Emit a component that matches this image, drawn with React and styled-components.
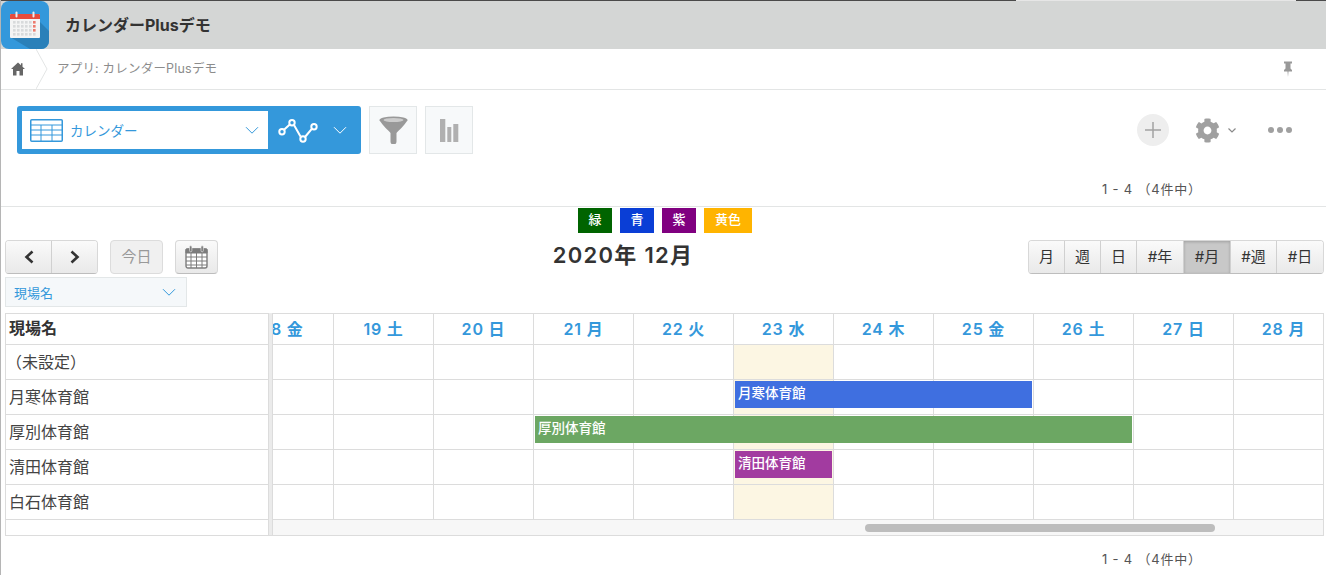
import styled, { createGlobalStyle } from "styled-components";
import { FaCog } from "react-icons/fa";

const days = [
  { label: "18 金" },
  { label: "19 土" },
  { label: "20 日" },
  { label: "21 月" },
  { label: "22 火" },
  { label: "23 水", today: true },
  { label: "24 木" },
  { label: "25 金" },
  { label: "26 土" },
  { label: "27 日" },
  { label: "28 月" },
];

const rows = [
  { name: "（未設定）", indent: true },
  { name: "月寒体育館", event: { start: 6, span: 3, color: "#3f6fe0" } },
  { name: "厚別体育館", event: { start: 4, span: 6, color: "#6ca763" } },
  { name: "清田体育館", event: { start: 6, span: 1, color: "#a23ba0" } },
  { name: "白石体育館" },
];

const legend = [
  { label: "緑", color: "#006400", width: 34 },
  { label: "青", color: "#0a3ed6", width: 34 },
  { label: "紫", color: "#800080", width: 34 },
  { label: "黄色", color: "#ffb400", width: 48 },
];

const modes = [
  { label: "月", width: 35 },
  { label: "週", width: 36 },
  { label: "日", width: 36 },
  { label: "#年", width: 47 },
  { label: "#月", width: 47, active: true },
  { label: "#週", width: 46 },
  { label: "#日", width: 47 },
];

const Chevron = ({ color, size = 14 }) => (
  <svg width={size} height={size * 0.6} viewBox="0 0 14 8" fill="none" stroke={color} strokeWidth="1">
    <path d="M1 1l6 6 6-6" />
  </svg>
);

const AppIcon = () => (
  <svg width="49" height="48" viewBox="0 0 49 48">
    <defs>
      <clipPath id="appclip">
        <rect x="1" y="0" width="48" height="48" rx="8" />
      </clipPath>
    </defs>
    <g clipPath="url(#appclip)">
      <rect x="1" y="0" width="48" height="48" fill="#3498db" />
      <path d="M39 20L49 30V48H30L10 36Z" fill="#2a80b9" />
      <rect x="10" y="13" width="30" height="24" rx="1" fill="#f4f4f4" />
      <path d="M10 18v-4a1 1 0 0 1 1-1h28a1 1 0 0 1 1 1v4z" fill="#e74c3c" />
      <rect x="15.500" y="10.500" width="2" height="6" rx="1" fill="#eee" />
      <rect x="32.500" y="10.500" width="2" height="6" rx="1" fill="#eee" />
      {[0, 1, 2, 3].map((r) =>
        [0, 1, 2, 3, 4, 5].map((c) => (
          <rect
            key={`${r}-${c}`}
            x={13 + c * 4}
            y={20 + r * 4}
            width="2.600"
            height="2.600"
            fill={c === 5 && r < 3 ? "#ec7b6e" : "#d8dadb"}
          />
        ))
      )}
    </g>
  </svg>
);

function App() {
  return (
    <Page>
      <GlobalStyle />
      <Header>
        <AppIcon />
        <AppTitle>カレンダーPlusデモ</AppTitle>
      </Header>
      <Breadcrumb>
        <HomeCell>
          <svg width="14" height="14" viewBox="0 0 14 14" fill="#666">
            <path d="M7 0.500L0 7h2v6.500h3.500V9h3v4.500H12V7h2l-2.500-2.300V1.200H10v2.100z" />
          </svg>
          <svg width="12" height="40" viewBox="0 0 12 40" fill="none" stroke="#e3e5e5">
            <path d="M0 0l11 20L0 40" />
          </svg>
        </HomeCell>
        <Crumb>アプリ: カレンダーPlusデモ</Crumb>
        <svg width="10" height="16" viewBox="0 0 10 16" fill="#999">
          <path d="M1 0.500h8v2H7.500v5L9 9v1.500H5.500L5 16l-.5-5.500H1V9l1.500-1.500v-5H1z" />
        </svg>
      </Breadcrumb>
      <Toolbar>
        <ViewPicker>
          <ViewSelect>
            <svg width="33" height="23" viewBox="0 0 33 23" fill="#fff" stroke="#3498db">
              <rect x="0.750" y="0.750" width="31.500" height="21.500" rx="1" strokeWidth="1.500" />
              <path d="M1 6h31M1 11h31M1 16h31M11 6v16M22 6v16" strokeWidth="1" />
            </svg>
            <ViewName>カレンダー</ViewName>
            <Chevron color="#3498db" />
          </ViewSelect>
          <GraphPicker>
            <svg width="40" height="26" viewBox="0 0 40 26" fill="none" stroke="#fff" strokeWidth="2">
              <path d="M6 12.800L11.800 7.600M16 8l6.500 11.500M27 20L33.800 11.800" />
              <circle cx="4" cy="14.700" r="2.700" />
              <circle cx="14" cy="5.700" r="2.700" />
              <circle cx="25" cy="22" r="2.700" />
              <circle cx="36" cy="9.700" r="2.700" />
            </svg>
            <Chevron color="#fff" />
          </GraphPicker>
        </ViewPicker>
        <ToolButton>
          <svg width="29" height="28" viewBox="0 0 29 28">
            <path d="M0.500 4C4 10 9 14 11.500 17v8.500a3 3 0 0 0 6 0V17C20 14 25 10 28.500 4z" fill="#999" />
            <ellipse cx="14.500" cy="4" rx="14" ry="3.500" fill="#999" />
            <ellipse cx="14.500" cy="4" rx="10" ry="2" fill="#ccc" />
          </svg>
        </ToolButton>
        <ToolButton>
          <svg width="19" height="23" viewBox="0 0 19 23" fill="#b0b0b0">
            <rect x="0" y="0" width="5.300" height="23" />
            <rect x="7.300" y="8" width="4" height="15" />
            <rect x="13.300" y="5" width="5" height="18" />
          </svg>
        </ToolButton>
        <ToolbarRight>
          <AddButton>
            <svg width="18" height="18" viewBox="0 0 18 18" stroke="#a3a3a3" strokeWidth="1.500">
              <path d="M9 1v16M1 9h16" />
            </svg>
          </AddButton>
          <GearGroup>
            <FaCog size={25} color="#a0a0a0" />
            <svg width="8" height="5" viewBox="0 0 8 5" fill="none" stroke="#8a8a8a" strokeWidth="1.200">
              <path d="M0.500 0.500L4 4l3.500-3.500" />
            </svg>
          </GearGroup>
          <Dots>
            <span />
            <span />
            <span />
          </Dots>
        </ToolbarRight>
      </Toolbar>
      <Pager>1 - 4 （4件中）</Pager>
      <Divider />
      <Legend>
        {legend.map((item) => (
          <LegendChip key={item.label} $color={item.color} $width={item.width}>
            {item.label}
          </LegendChip>
        ))}
      </Legend>
      <NavRow>
        <NavLeft>
          <ButtonGroup>
            <NavButton $width={45}>
              <svg width="12" height="14" viewBox="0 0 12 14" fill="none" stroke="#333" strokeWidth="2.600">
                <path d="M9.500 1.500L3.500 7l6 5.500" />
              </svg>
            </NavButton>
            <NavButton $width={46}>
              <svg width="12" height="14" viewBox="0 0 12 14" fill="none" stroke="#333" strokeWidth="2.600">
                <path d="M2.500 1.500L8.500 7l-6 5.500" />
              </svg>
            </NavButton>
          </ButtonGroup>
          <TodayButton>今日</TodayButton>
          <CalendarButton>
            <svg width="23" height="24" viewBox="0 0 23 24" fill="none" stroke="#7d7d7d">
              <rect x="1" y="4" width="21" height="19" rx="2" fill="#fff" strokeWidth="1.400" />
              <path d="M1 4h21v4H1z" fill="#7d7d7d" />
              <path d="M1 12h21M1 16h21M1 20h21M6 8v15M11.500 8v15M17 8v15" strokeWidth="1" />
              <rect x="4.500" y="0.800" width="2.400" height="6" rx="1.200" fill="#7d7d7d" stroke="#eee" strokeWidth="0.600" />
              <rect x="16" y="0.800" width="2.400" height="6" rx="1.200" fill="#7d7d7d" stroke="#eee" strokeWidth="0.600" />
            </svg>
          </CalendarButton>
        </NavLeft>
        <MonthTitle>2020年 12月</MonthTitle>
        <ButtonGroup>
          {modes.map((mode) => (
            <ModeButton key={mode.label} $width={mode.width} $active={mode.active}>
              {mode.label}
            </ModeButton>
          ))}
        </ButtonGroup>
      </NavRow>
      <FilterSelect>
        <span>現場名</span>
        <Chevron color="#3498db" />
      </FilterSelect>
      <Schedule>
        <NameColumn>
          <NameHead>現場名</NameHead>
          {rows.map((row) => (
            <NameCell key={row.name} $indent={row.indent}>
              {row.name}
            </NameCell>
          ))}
        </NameColumn>
        <Splitter />
        <Timeline>
          <TimelineInner>
            <DayHead>
              {days.map((day) => (
                <DayLabel key={day.label}>{day.label}</DayLabel>
              ))}
            </DayHead>
            {rows.map((row) => (
              <DayRow key={row.name}>
                {days.map((day, i) => (
                  <DayCell key={day.label} $col={i + 1} $today={day.today} />
                ))}
                {row.event && (
                  <EventBar $start={row.event.start} $span={row.event.span} $color={row.event.color}>
                    {row.name}
                  </EventBar>
                )}
              </DayRow>
            ))}
          </TimelineInner>
          <ScrollTrack>
            <ScrollThumb />
          </ScrollTrack>
        </Timeline>
      </Schedule>
      <Pager $bottom>1 - 4 （4件中）</Pager>
    </Page>
  );
}

export default App;

const GlobalStyle = createGlobalStyle`
  html, body {
    margin: 0;
    padding: 0;
    background: #fff;
  }
  body {
    font-family: Inter, "Noto Sans CJK JP", sans-serif;
    color: #333;
    overflow: hidden;
  }
`;

const Page = styled.div`
  width: 1326px;
  height: 575px;
  box-sizing: border-box;
  overflow: hidden;
  border-left: 1px solid #b5b5b5;
`;

const Header = styled.header`
  display: flex;
  align-items: center;
  height: 49px;
  box-sizing: border-box;
  margin-left: -1px;
  padding-top: 1px;
  background:
    linear-gradient(90deg, #4a4a4a 1016px, #e6e6e6 1016px, #e6e6e6 1296px, #4a4a4a 1296px) top / 100% 1px no-repeat,
    #d4d6d5;
  overflow: hidden;
`;

const AppTitle = styled.h1`
  margin: 0 0 3px 16px;
  font-size: 16px;
  font-weight: 700;
  color: #333;
`;

const Breadcrumb = styled.nav`
  display: flex;
  align-items: center;
  height: 41px;
  box-sizing: border-box;
  padding-right: 33px;
  border-bottom: 1px solid #e3e5e5;
`;

const HomeCell = styled.div`
  display: flex;
  align-items: center;
  gap: 11px;
  padding-left: 10px;
`;

const Crumb = styled.span`
  flex: 1;
  margin: 0 0 3px 9px;
  font-size: 12.5px;
  letter-spacing: 0.2px;
  color: #8c8c8c;
`;

const Toolbar = styled.div`
  display: flex;
  align-items: center;
  gap: 8px;
  height: 48px;
  margin-top: 16px;
  padding-left: 16px;
`;

const ViewPicker = styled.div`
  display: flex;
  align-items: center;
  width: 344px;
  height: 48px;
  box-sizing: border-box;
  padding: 5px 0 5px 5px;
  background: #3498db;
  border-radius: 3px;
`;

const ViewSelect = styled.div`
  display: flex;
  align-items: center;
  width: 246px;
  height: 38px;
  box-sizing: border-box;
  padding: 0 9px 0 8px;
  background: #fff;
`;

const ViewName = styled.span`
  flex: 1;
  margin: 0 0 1px 7px;
  font-size: 13.5px;
  color: #3498db;
`;

const GraphPicker = styled.div`
  display: flex;
  align-items: center;
  gap: 15px;
  padding-left: 10px;
`;

const ToolButton = styled.div`
  display: flex;
  align-items: center;
  justify-content: center;
  width: 48px;
  height: 48px;
  box-sizing: border-box;
  background: #f7f9fa;
  border: 1px solid #e3e7e8;
`;

const ToolbarRight = styled.div`
  display: flex;
  align-items: center;
  margin-left: auto;
  padding-right: 34px;
`;

const AddButton = styled.div`
  display: flex;
  align-items: center;
  justify-content: center;
  width: 32px;
  height: 32px;
  border-radius: 50%;
  background: #eee;
`;

const GearGroup = styled.div`
  display: flex;
  align-items: center;
  gap: 8px;
  margin-left: 26px;
`;

const Dots = styled.div`
  display: flex;
  gap: 3px;
  margin-left: 32px;

  span {
    width: 6px;
    height: 6px;
    border-radius: 50%;
    background: #a0a0a0;
  }
`;

const Pager = styled.div`
  height: 20px;
  margin-top: ${(p) => (p.$bottom ? "13px" : "25px")};
  padding-left: 1101px;
  font-size: 13px;
  line-height: 20px;
  letter-spacing: 0.8px;
  color: #555;
  white-space: nowrap;
`;

const Divider = styled.hr`
  height: 1px;
  margin: 7px 0 0;
  border: 0;
  background: #e3e5e5;
`;

const Legend = styled.div`
  display: flex;
  justify-content: center;
  gap: 8px;
  height: 25px;
  margin-top: 1px;
  padding-left: 3px;
`;

const LegendChip = styled.span`
  width: ${(p) => p.$width}px;
  height: 25px;
  background: ${(p) => p.$color};
  color: #fff;
  font-size: 13px;
  font-weight: 500;
  line-height: 23px;
  text-align: center;
`;

const NavRow = styled.div`
  display: flex;
  align-items: center;
  height: 34px;
  margin-top: 7px;
  padding: 0 2px 0 4px;
`;

const NavLeft = styled.div`
  display: flex;
  gap: 12px;
`;

const ButtonGroup = styled.div`
  display: flex;
  height: 34px;
  box-sizing: border-box;
  border: 1px solid #d8d8d8;
  border-bottom-color: #bdbdbd;
  border-radius: 4px;
  overflow: hidden;
`;

const NavButton = styled.div`
  display: flex;
  align-items: center;
  justify-content: center;
  width: ${(p) => p.$width}px;
  box-sizing: border-box;
  background: linear-gradient(#fafafa, #e9e9e9);

  & + & {
    border-left: 1px solid #d0d0d0;
  }
`;

const TodayButton = styled.div`
  display: flex;
  align-items: center;
  justify-content: center;
  width: 53px;
  height: 34px;
  box-sizing: border-box;
  padding-bottom: 3px;
  background: #f0f0f0;
  border: 1px solid #dcdcdc;
  border-radius: 4px;
  font-size: 15px;
  color: #999;
`;

const CalendarButton = styled.div`
  display: flex;
  align-items: center;
  justify-content: center;
  width: 43px;
  height: 34px;
  box-sizing: border-box;
  background: linear-gradient(#fafafa, #e9e9e9);
  border: 1px solid #d8d8d8;
  border-bottom-color: #bdbdbd;
  border-radius: 4px;
`;

const MonthTitle = styled.div`
  flex: 1;
  padding-bottom: 8px;
  font-size: 22px;
  font-weight: 600;
  letter-spacing: 1.3px;
  color: #333;
  text-align: center;
`;

const ModeButton = styled.div`
  display: flex;
  align-items: center;
  justify-content: center;
  width: ${(p) => p.$width}px;
  box-sizing: border-box;
  padding-bottom: 3px;
  background: ${(p) => (p.$active ? "#c8c8c8" : "linear-gradient(#fafafa, #e9e9e9)")};
  box-shadow: ${(p) => (p.$active ? "inset 0 1px 3px rgba(0,0,0,0.2)" : "none")};
  font-size: 15px;
  color: #333;

  & + & {
    border-left: 1px solid #d0d0d0;
  }
`;

const FilterSelect = styled.div`
  display: flex;
  align-items: center;
  justify-content: space-between;
  width: 182px;
  height: 30px;
  box-sizing: border-box;
  margin: 3px 0 0 4px;
  padding: 0 10px 0 8px;
  background: #f5f8fa;
  border: 1px solid #e3e7e8;
  font-size: 13px;
  color: #3498db;
`;

const Schedule = styled.div`
  display: flex;
  height: 223px;
  box-sizing: border-box;
  margin: 6px 2px 0 4px;
  border-bottom: 1px solid #dcdcdc;
`;

const NameColumn = styled.div`
  width: 263px;
  box-sizing: border-box;
  border-left: 1px solid #dcdcdc;
  border-top: 1px solid #dcdcdc;
`;

const NameHead = styled.div`
  height: 31px;
  box-sizing: border-box;
  padding-left: 3px;
  font-size: 16px;
  font-weight: 700;
  line-height: 29px;
  color: #333;
  border-bottom: 1px solid #dcdcdc;
`;

const NameCell = styled.div`
  height: 35px;
  box-sizing: border-box;
  padding-left: ${(p) => (p.$indent ? "0" : "3px")};
  font-size: 16px;
  line-height: 35px;
  color: #444;
  border-bottom: 1px solid #dcdcdc;
`;

const Splitter = styled.div`
  width: 4px;
  box-sizing: border-box;
  background: #ebebeb;
  border-left: 1px solid #dcdcdc;
`;

const Timeline = styled.div`
  flex: 1;
  min-width: 0;
  overflow: hidden;
  border-top: 1px solid #dcdcdc;
  border-right: 1px solid #dcdcdc;
  border-left: 1px solid #dcdcdc;
`;

const TimelineInner = styled.div`
  width: 1100px;
  margin-left: -39px;
`;

const DayHead = styled.div`
  display: grid;
  grid-template-columns: repeat(11, 100px);
  height: 31px;
  border-bottom: 1px solid #dcdcdc;
  box-sizing: border-box;
`;

const DayLabel = styled.div`
  box-sizing: border-box;
  border-right: 1px solid #dcdcdc;
  font-size: 16px;
  font-weight: 600;
  line-height: 30px;
  letter-spacing: 0.8px;
  text-align: center;
  color: #3498db;
`;

const DayRow = styled.div`
  display: grid;
  grid-template-columns: repeat(11, 100px);
  grid-template-rows: 35px;
  height: 35px;
`;

const DayCell = styled.div`
  grid-row: 1;
  grid-column: ${(p) => p.$col};
  box-sizing: border-box;
  background: ${(p) => (p.$today ? "#fcf6e3" : "#fff")};
  border-right: 1px solid #dcdcdc;
  border-bottom: 1px solid #dcdcdc;
`;

const EventBar = styled.div`
  grid-row: 1;
  grid-column: ${(p) => p.$start} / span ${(p) => p.$span};
  height: 27px;
  margin: 1px 2px 0 1px;
  padding-left: 3px;
  background: ${(p) => p.$color};
  color: #fff;
  font-size: 13.5px;
  font-weight: 500;
  line-height: 25px;
  z-index: 1;
`;

const ScrollTrack = styled.div`
  height: 15px;
  box-sizing: border-box;
  padding: 4px 0 0 592px;
  background: #f7f7f7;
`;

const ScrollThumb = styled.div`
  width: 350px;
  height: 8px;
  border-radius: 4px;
  background: #bdbdbd;
`;
